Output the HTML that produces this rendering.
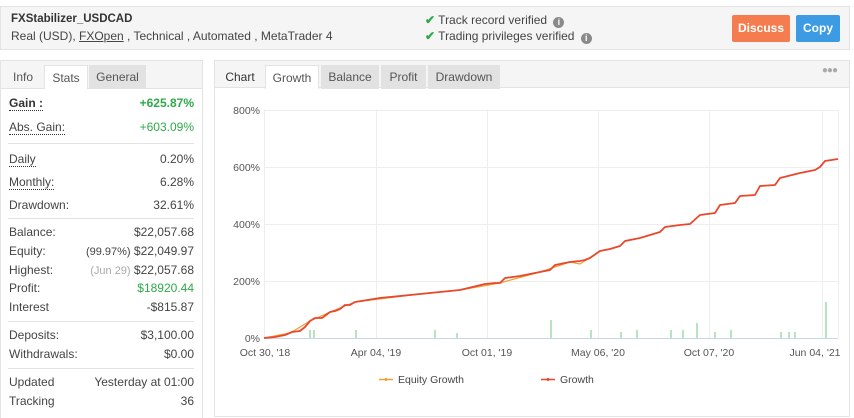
<!DOCTYPE html>
<html><head><style>
*{box-sizing:border-box;margin:0;padding:0}
body{width:854px;height:418px;background:#fff;font-family:"Liberation Sans",sans-serif;font-size:12px;color:#444;position:relative;overflow:hidden}
.hdr{position:absolute;left:0;top:6px;width:850px;height:44px;background:#f5f5f5;border:1px solid #e3e3e3}
.t1{position:absolute;left:10px;top:6px;font-size:11.5px;font-weight:bold;color:#333}
.t2{position:absolute;left:10px;top:22px;font-size:12px;color:#444}
.v{position:absolute;left:424px;font-size:12px;color:#444}
.v b{color:#2eaa4a;font-weight:bold}
.i{display:inline-block;width:11px;height:11px;border-radius:50%;background:#8a8a8a;color:#fff;font-size:9px;line-height:11px;text-align:center;font-weight:bold;vertical-align:-1px;margin-left:3px}
.btn{position:absolute;top:8px;height:27px;color:#fff;font-size:12px;font-weight:bold;text-align:center;line-height:27px;border-radius:2px}
.lp{position:absolute;left:0;top:60px;width:203px;height:358px;border:1px solid #e3e3e3;border-bottom:none;background:#fff}
.tabs{height:28px;background:#f5f5f5;border-bottom:1px solid #e3e3e3;position:relative}
.tab{position:absolute;top:4px;height:24px;line-height:24px;text-align:center;font-size:12px;color:#555}
.row{position:absolute;left:8px;right:8px;font-size:12px;display:flex;justify-content:space-between}
.u{border-bottom:1px dotted #333}
.g{color:#2eaa4a}
.sep{position:absolute;left:7px;right:8px;height:1px;background:#e3e3e3}
.rp{position:absolute;left:214px;top:60px;width:636px;height:357px;border:1px solid #e3e3e3;background:#fff}
</style></head><body>
<div class="hdr">
 <div class="t1">FXStabilizer_USDCAD</div>
 <div class="t2">Real (USD), <span style="text-decoration:underline">FXOpen</span> , Technical , Automated , MetaTrader 4</div>
 <div class="v" style="top:6px"><b>✔</b> Track record verified <span class="i">i</span></div>
 <div class="v" style="top:22px"><b>✔</b> Trading privileges verified <span class="i">i</span></div>
 <div class="btn" style="left:731px;width:58px;background:#f47c4e">Discuss</div>
 <div class="btn" style="left:795px;width:44px;background:#3d9be3">Copy</div>
</div>
<div class="lp">
 <div class="tabs">
  <div class="tab" style="left:2px;width:40px">Info</div>
  <div class="tab" style="left:43px;width:44px;background:#fff;border:1px solid #e3e3e3;border-bottom:none">Stats</div>
  <div class="tab" style="left:88px;width:57px;background:#e2e2e2">General</div>
 </div>
 <div class="row" style="top:35px"><span class="u" style="font-weight:bold;color:#333">Gain :</span><b class="g">+625.87%</b></div>
 <div class="row" style="top:59px"><span class="u">Abs. Gain:</span><span class="g">+603.09%</span></div>
 <div class="sep" style="top:82px"></div>
 <div class="row" style="top:91px"><span class="u">Daily</span><span>0.20%</span></div>
 <div class="row" style="top:114px"><span class="u">Monthly:</span><span>6.28%</span></div>
 <div class="row" style="top:137px"><span>Drawdown:</span><span>32.61%</span></div>
 <div class="sep" style="top:157px"></div>
 <div class="row" style="top:164px"><span>Balance:</span><span>$22,057.68</span></div>
 <div class="row" style="top:183px"><span>Equity:</span><span><small style="font-size:11px">(99.97%)</small> $22,049.97</span></div>
 <div class="row" style="top:202px"><span>Highest:</span><span><small style="font-size:11px;color:#aaa">(Jun 29)</small> $22,057.68</span></div>
 <div class="row" style="top:220px"><span>Profit:</span><span class="g">$18920.44</span></div>
 <div class="row" style="top:239px"><span>Interest</span><span>-$815.87</span></div>
 <div class="sep" style="top:260px"></div>
 <div class="row" style="top:267px"><span>Deposits:</span><span>$3,100.00</span></div>
 <div class="row" style="top:286px"><span>Withdrawals:</span><span>$0.00</span></div>
 <div class="sep" style="top:307px"></div>
 <div class="row" style="top:314px"><span>Updated</span><span>Yesterday at 01:00</span></div>
 <div class="row" style="top:333px"><span>Tracking</span><span>36</span></div>
</div>
<div class="rp">
 <div class="tabs" style="height:27px">
  <div class="tab" style="left:2px;width:46px;color:#333">Chart</div>
  <div class="tab" style="left:50px;width:54px;background:#fff;border:1px solid #e3e3e3;border-bottom:none">Growth</div>
  <div class="tab" style="left:106px;width:58px;background:#e2e2e2">Balance</div>
  <div class="tab" style="left:166px;width:45px;background:#e2e2e2">Profit</div>
  <div class="tab" style="left:213px;width:72px;background:#e2e2e2">Drawdown</div>
  <div style="position:absolute;right:12px;top:4px;color:#aaa;font-size:10px;letter-spacing:-1px">●●●</div>
 </div>
</div>
<svg style="position:absolute;left:0;top:0" width="854" height="418" font-family="Liberation Sans,sans-serif" font-size="10.5" fill="#555">
 <g stroke="#eee" stroke-width="1">
  <line x1="264" y1="110.5" x2="838" y2="110.5"/><line x1="264" y1="167.5" x2="838" y2="167.5"/><line x1="264" y1="224.5" x2="838" y2="224.5"/><line x1="264" y1="281.5" x2="838" y2="281.5"/>
  <line x1="376.5" y1="110" x2="376.5" y2="338"/><line x1="487.5" y1="110" x2="487.5" y2="338"/><line x1="598.5" y1="110" x2="598.5" y2="338"/><line x1="709.5" y1="110" x2="709.5" y2="338"/><line x1="822.5" y1="110" x2="822.5" y2="338"/><line x1="264.5" y1="110" x2="264.5" y2="338"/><line x1="838.5" y1="110" x2="838.5" y2="338"/>
 </g>
 <line x1="264" y1="338.5" x2="838" y2="338.5" stroke="#c8d6e5"/>
 <g fill="#b8e2c0">
  <rect x="309" y="330" width="2" height="8"/><rect x="313" y="330" width="2" height="8"/><rect x="355" y="330" width="2" height="8"/><rect x="434" y="330" width="2" height="8"/><rect x="456" y="333" width="2" height="5"/><rect x="550" y="320" width="2" height="18"/><rect x="590" y="330" width="2" height="8"/><rect x="620" y="332" width="2" height="6"/><rect x="636" y="330" width="2" height="8"/><rect x="670" y="330" width="2" height="8"/><rect x="682" y="330" width="2" height="8"/><rect x="696" y="323" width="2" height="15"/><rect x="714" y="332" width="2" height="6"/><rect x="730" y="330" width="2" height="8"/><rect x="780" y="332" width="2" height="6"/><rect x="788" y="332" width="2" height="6"/><rect x="794" y="332" width="2" height="6"/><rect x="825" y="302" width="2" height="36"/>
 </g>
 <polyline fill="none" stroke="#f0a030" stroke-width="1.2" points="264,338 290,333 310,321 330,312 355,302 420,294 460,290 500,283 540,272 570,262 580,264 600,251"/>
 <polyline fill="none" stroke="#e8472c" stroke-width="1.8" stroke-linejoin="round" points="264,338 275,337 285,335 292,332 300,331 305,327 310,321 315,318 322,318 330,312 335,311 340,309 345,305 350,305 355,302 380,298 400,296 420,294 440,292 460,290 485,284 495,283 500,283 505,278 520,276 540,272 550,270 555,265 570,262 580,261 585,260 590,258 600,251 610,249 620,246 625,241 640,238 650,235 660,232 665,227 680,225 690,224 700,215 715,213 720,205 735,203 740,196 755,195 760,186 775,185 780,178 800,173 815,170 820,167 825,161 838,159"/>
 <g text-anchor="end"><text x="260" y="114">800%</text><text x="260" y="171">600%</text><text x="260" y="228">400%</text><text x="260" y="285">200%</text><text x="260" y="342">0%</text></g>
 <g text-anchor="middle"><text x="265" y="356">Oct 30, '18</text><text x="376" y="356">Apr 04, '19</text><text x="487" y="356">Oct 01, '19</text><text x="598" y="356">May 06, '20</text><text x="709" y="356">Oct 07, '20</text><text x="815" y="356">Jun 04, '21</text></g>
 <line x1="379" y1="379.5" x2="393" y2="379.5" stroke="#f0a030" stroke-width="1.5"/><circle cx="386" cy="379.5" r="1.5" fill="#f0a030"/><text x="398" y="383" fill="#444">Equity Growth</text>
 <line x1="541" y1="379.5" x2="555" y2="379.5" stroke="#e8472c" stroke-width="1.5"/><circle cx="548" cy="379.5" r="1.5" fill="#e8472c"/><text x="560" y="383" fill="#444">Growth</text>
</svg>
</body></html>
